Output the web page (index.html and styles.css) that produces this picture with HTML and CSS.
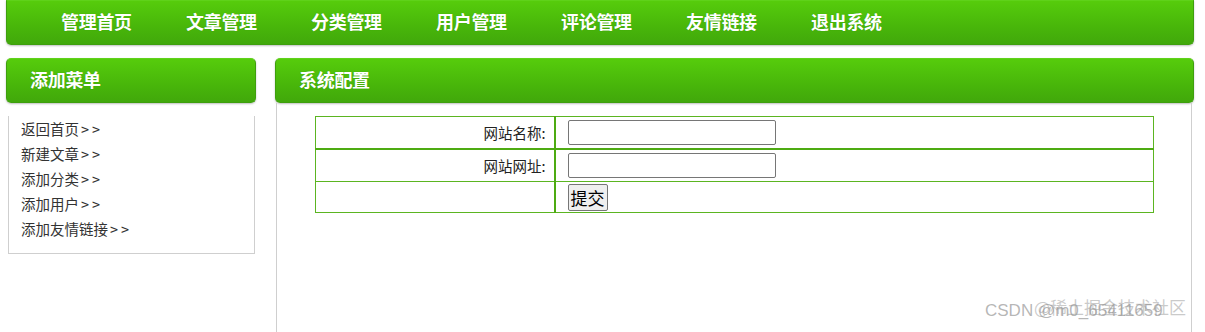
FILE: index.html
```html
<!DOCTYPE html>
<html lang="zh-CN">
<head>
<meta charset="utf-8">
<title>后台管理</title>
<link rel="stylesheet" href="styles.css">
</head>
<body>
<div class="page">
  <nav class="topnav">
    <a class="nav-item">管理首页</a>
    <a class="nav-item">文章管理</a>
    <a class="nav-item">分类管理</a>
    <a class="nav-item">用户管理</a>
    <a class="nav-item">评论管理</a>
    <a class="nav-item">友情链接</a>
    <a class="nav-item">退出系统</a>
  </nav>
  <div class="main">
    <aside class="side">
      <div class="bar"><span class="bar-title">添加菜单</span></div>
      <ul class="menu">
        <li>返回首页<span class="arr">&gt;&gt;</span></li>
        <li>新建文章<span class="arr">&gt;&gt;</span></li>
        <li>添加分类<span class="arr">&gt;&gt;</span></li>
        <li>添加用户<span class="arr">&gt;&gt;</span></li>
        <li>添加友情链接<span class="arr">&gt;&gt;</span></li>
      </ul>
    </aside>
    <section class="content">
      <div class="bar"><span class="bar-title">系统配置</span></div>
      <div class="panel">
        <table class="form">
          <tr class="r1">
            <td class="lab">网站名称:</td>
            <td class="val"><input type="text" class="inp"></td>
          </tr>
          <tr class="r2">
            <td class="lab">网站网址:</td>
            <td class="val"><input type="text" class="inp"></td>
          </tr>
          <tr class="r3">
            <td class="lab"></td>
            <td class="val"><button class="btn">提交</button></td>
          </tr>
        </table>
      </div>
    </section>
  </div>
  <div class="wm wm1">CSDN @m0_65411659</div>
  <div class="wm wm2">@稀土掘金技术社区</div>
</div>
</body>
</html>
```
FILE: styles.css
```css
html, body {
  margin: 0;
  padding: 0;
  background: #fff;
  font-family: "Noto Sans CJK SC", "Noto Sans", sans-serif;
}
.page {
  position: relative;
  width: 1205px;
  height: 332px;
  overflow: hidden;
  padding: 0 11px 0 6px;
  box-sizing: border-box;
}
.topnav {
  display: flex;
  height: 45px;
  box-sizing: border-box;
  padding: 0 0 3px 33px;
  align-items: center;
  background: linear-gradient(#56cc0c, #48b60a 60%, #41a80b);
  border: 1px solid #3e9f0d;
  border-top-color: #5fd21a;
  border-radius: 0 0 5px 5px;
  box-shadow: 0 1px 2px rgba(0,0,0,0.25);
}
.nav-item {
  width: 125px;
  text-align: left;
  padding-left: 21px;
  box-sizing: border-box;
  color: #fff;
  font-weight: bold;
  font-size: 18px;
  line-height: 24px;
  letter-spacing: -0.3px;
  text-shadow: 0 0 1px rgba(0,80,0,0.3);
}
.main {
  display: flex;
  gap: 19px;
  margin-top: 13px;
}
.side {
  width: 250px;
  flex: none;
}
.content {
  flex: 1;
}
.bar {
  height: 45px;
  box-sizing: border-box;
  display: flex;
  align-items: center;
  padding: 0 0 3px 23px;
  background: linear-gradient(#56cc0c, #48b60a 60%, #41a80b);
  border: 1px solid #3e9f0d;
  border-top-color: #5fd21a;
  border-radius: 5px;
  box-shadow: 0 1px 2px rgba(0,0,0,0.25);
}
.bar-title {
  color: #fff;
  font-weight: bold;
  font-size: 18px;
  letter-spacing: -0.3px;
  line-height: 24px;
  text-shadow: 0 0 1px rgba(0,80,0,0.3);
}
.menu {
  list-style: none;
  margin: 13px 1px 0 2px;
  padding: 0 0 12px 12px;
  border: 1px solid #cfcfcf;
  border-top: none;
}
.menu li {
  font-size: 14.5px;
  line-height: 25px;
  color: #333;
}
.arr {
  letter-spacing: 3px;
  margin-left: 2px;
}
.panel {
  margin: 0 2px 0 1px;
  border-left: 1px solid #cfcfcf;
  border-right: 1px solid #cfcfcf;
  height: 240px;
  padding: 13px 37px 0 38px;
}
.form {
  width: 100%;
  border-collapse: collapse;
  border: 1px solid #5bb521;
}
.form td {
  height: 31px;
  padding: 0;
  border-top: 1px solid #5bb521;
  vertical-align: middle;
}
.form tr.r2 td {
  border-top: 2px solid #4eab12;
}
.form tr.r3 td {
  height: 30px;
}
.form td.lab {
  width: 239px;
  text-align: right;
  padding-right: 8px;
  box-sizing: border-box;
  font-size: 14.5px;
  color: #222;
  border-right: 2px solid #4eab12;
}
.form td.val {
  padding-left: 12px;
}
.inp {
  width: 208px;
  height: 25px;
  box-sizing: border-box;
  border: 1px solid #767676;
  border-radius: 2px;
  padding: 0 4px;
  margin: 0;
  display: block;
}
.btn {
  display: block;
  height: 27px;
  padding: 0 2px;
  font-family: "Noto Sans CJK SC", sans-serif;
  font-size: 17px;
  line-height: 23px;
  color: #000;
  background: #efefef;
  border: 1px solid #767676;
  border-radius: 2px;
  margin: 0;
}
.wm {
  position: absolute;
  color: rgba(120,120,120,0.55);
  white-space: nowrap;
  font-size: 16px;
}
.wm1 {
  left: 985px;
  top: 301px;
  font-family: "Liberation Sans", sans-serif;
  font-size: 17px;
}
.wm2 {
  left: 1034px;
  top: 294px;
  font-size: 17px;
  color: rgba(150,150,150,0.5);
}
```
